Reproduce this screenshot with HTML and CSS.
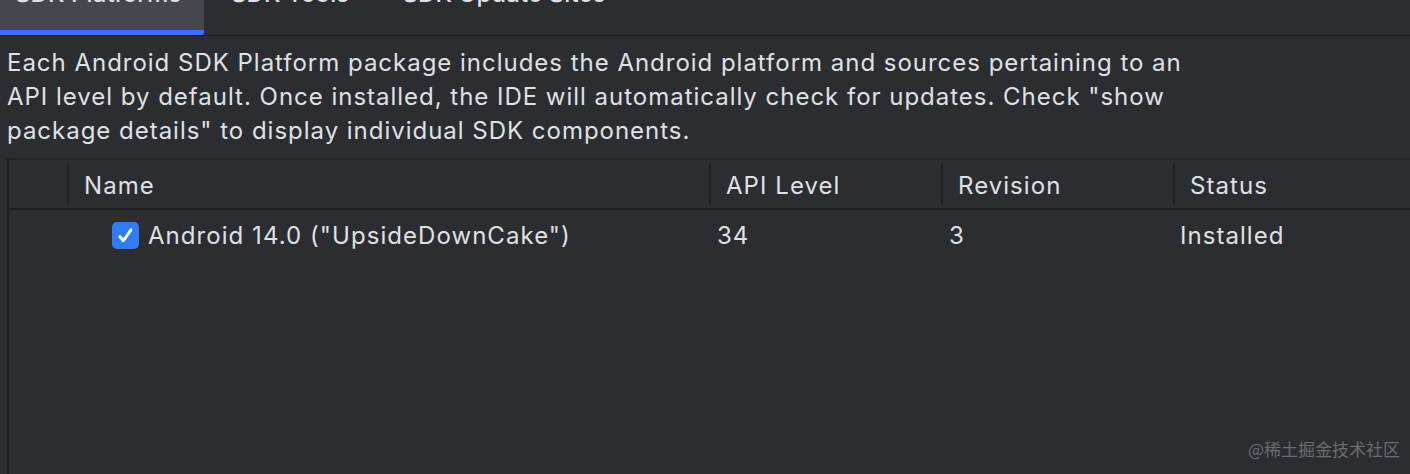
FILE: index.html
```html
<!DOCTYPE html>
<html lang="en">
<head>
<meta charset="utf-8">
<title>SDK Platforms</title>
<link rel="stylesheet" href="styles.css">
</head>
<body>
<div class="page">
  <div class="tabbar">
    <div class="tab tab-active">SDK Platforms</div>
    <div class="tab">SDK Tools</div>
    <div class="tab">SDK Update Sites</div>
  </div>
  <p class="desc">Each Android SDK Platform package includes the Android platform and sources pertaining to an<br>API level by default. Once installed, the IDE will automatically check for updates. Check "show<br>package details" to display individual SDK components.</p>
  <div class="table">
    <div class="thead">
      <div class="th th-blank"></div>
      <div class="th">Name</div>
      <div class="th">API Level</div>
      <div class="th">Revision</div>
      <div class="th th-last">Status</div>
    </div>
    <div class="tr">
      <div class="td"></div>
      <div class="td td-name">
        <span class="check"><svg width="19" height="19" viewBox="0 0 17 17"><path d="M3.4 9.4 L6.6 13.2 L13.4 3.4" fill="none" stroke="#fff" stroke-width="2.6" stroke-linecap="round" stroke-linejoin="round"/></svg></span>
        <span>Android 14.0 ("UpsideDownCake")</span>
      </div>
      <div class="td td-data">34</div>
      <div class="td td-data">3</div>
      <div class="td td-data td-status">Installed</div>
    </div>
  </div>
  <div class="watermark">@稀土掘金技术社区</div>
</div>
</body>
</html>
```
FILE: styles.css
```css
html, body {
  margin: 0;
  padding: 0;
  background: #2b2d30;
  overflow: hidden;
}
body {
  width: 1410px;
  height: 474px;
  font-family: Inter, "Noto Sans", "Noto Sans CJK SC", sans-serif;
  color: #dfe1e5;
}
.page {
  position: relative;
  height: 474px;
  overflow: hidden;
}
.tabbar {
  display: flex;
  height: 55px;
  margin-top: -20px;
  border-bottom: 1px solid #1e1f22;
  font-size: 24px;
  letter-spacing: 0.1px;
  font-weight: 500;
  white-space: nowrap;
}
.tab {
  box-sizing: border-box;
  height: 55px;
  padding: 0 26px 0 27px;
  line-height: 28px;
  color: #dfe1e5;
}
.tab-active {
  width: 204px;
  padding-left: 15px;
  background: #46474c;
  border-bottom: 5px solid #3574f0;
  border-bottom-right-radius: 2px;
}
.desc {
  margin: 10px 0 0 0;
  padding-left: 7px;
  font-size: 24px;
  line-height: 34px;
  letter-spacing: 0.98px;
  color: #dfe1e5;
}
.table {
  margin: 10px 0 0 7px;
  border-top: 2px solid #222326;
  border-left: 2px solid #1e1f22;
  height: 400px;
}
.thead, .tr {
  display: grid;
  grid-template-columns: 60px 642px 232px 232px 1fr;
}
.thead {
  height: 48px;
  border-bottom: 2px solid #1e1f22;
  align-items: center;
}
.th {
  box-sizing: border-box;
  height: 42px;
  display: flex;
  align-items: center;
  padding-top: 2px;
  font-size: 24px;
  letter-spacing: 1.05px;
  padding-left: 15px;
  border-right: 2px solid #222326;
  color: #dfe1e5;
}
.th-blank { padding-left: 0; }
.th-last { border-right: none; }
.tr {
  height: 50px;
  align-items: center;
  font-size: 24px;
  letter-spacing: 1.05px;
}
.td {
  display: flex;
  align-items: center;
  height: 50px;
}
.td-name {
  padding-left: 43px;
  gap: 9px;
}
.td-data { padding-left: 6px; }
.td-status { padding-left: 5px; }
.check {
  width: 27px;
  height: 27px;
  border-radius: 5px;
  background: #2f7cf6;
  display: flex;
  align-items: center;
  justify-content: center;
}
.watermark {
  position: absolute;
  right: 10px;
  bottom: 13px;
  font-size: 17px;
  color: #6a6c70;
  font-family: "Noto Sans CJK SC", sans-serif;
}
```
